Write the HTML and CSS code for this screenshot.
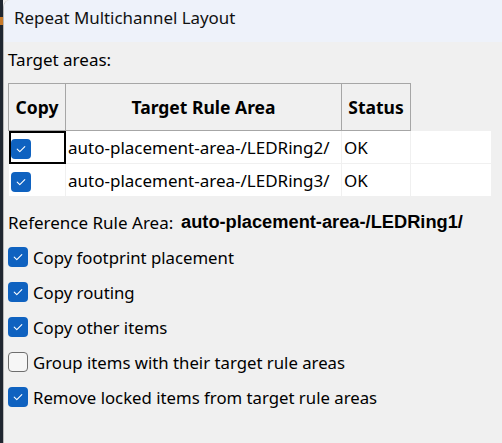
FILE: index.html
```html
<!DOCTYPE html>
<html>
<head>
<meta charset="utf-8">
<link rel="stylesheet" href="styles.css">
</head>
<body>
<div class="desk">
  <div class="strip"><span class="strip-mark"></span></div>
  <div class="window">
    <div class="titlebar">Repeat Multichannel Layout</div>
    <div class="content">
      <div class="section-label">Target areas:</div>
      <div class="grid-wrap">
        <table class="grid">
          <colgroup>
            <col class="w-copy">
            <col class="w-area">
            <col class="w-status">
            <col>
          </colgroup>
          <thead>
            <tr>
              <th>Copy</th>
              <th>Target Rule Area</th>
              <th>Status</th>
              <th class="c-fill"></th>
            </tr>
          </thead>
          <tbody>
            <tr>
              <td class="c-copy focus"><span class="cb on"><svg viewBox="0 0 20 20"><path d="M6.2 10.2 L8.8 12.7 L13.8 7.6"/></svg></span></td>
              <td>auto-placement-area-/LEDRing2/</td>
              <td>OK</td>
              <td></td>
            </tr>
            <tr>
              <td class="c-copy"><span class="cb on"><svg viewBox="0 0 20 20"><path d="M6.2 10.2 L8.8 12.7 L13.8 7.6"/></svg></span></td>
              <td>auto-placement-area-/LEDRing3/</td>
              <td>OK</td>
              <td></td>
            </tr>
          </tbody>
        </table>
      </div>
      <div class="ref-row">
        <span class="ref-label">Reference Rule Area:</span>
        <span class="ref-value">auto-placement-area-/LEDRing1/</span>
      </div>
      <div class="options">
        <label class="opt"><span class="cb on"><svg viewBox="0 0 20 20"><path d="M6.2 10.2 L8.8 12.7 L13.8 7.6"/></svg></span><span>Copy footprint placement</span></label>
        <label class="opt"><span class="cb on"><svg viewBox="0 0 20 20"><path d="M6.2 10.2 L8.8 12.7 L13.8 7.6"/></svg></span><span>Copy routing</span></label>
        <label class="opt"><span class="cb on"><svg viewBox="0 0 20 20"><path d="M6.2 10.2 L8.8 12.7 L13.8 7.6"/></svg></span><span>Copy other items</span></label>
        <label class="opt"><span class="cb off"></span><span>Group items with their target rule areas</span></label>
        <label class="opt"><span class="cb on"><svg viewBox="0 0 20 20"><path d="M6.2 10.2 L8.8 12.7 L13.8 7.6"/></svg></span><span>Remove locked items from target rule areas</span></label>
      </div>
    </div>
  </div>
</div>
</body>
</html>
```
FILE: styles.css
```css
html, body {
  margin: 0;
  padding: 0;
  height: 100%;
  background: #f0f0f0;
  font-family: "Noto Sans", "Open Sans", sans-serif;
  color: #000;
  overflow: hidden;
}
.desk {
  display: flex;
  height: 443px;
}
.strip {
  width: 3px;
  flex: none;
  background: #1f2630;
  padding-top: 17px;
  box-sizing: border-box;
}
.strip-mark {
  display: block;
  width: 3px;
  height: 8px;
  background: #c87a2a;
}
.window {
  flex: 1;
  border-left: 1px solid #b8b8b8;
  border-top-left-radius: 7px;
  background: #f0f0f0;
  display: flex;
  flex-direction: column;
  overflow: hidden;
}
.titlebar {
  height: 42px;
  box-sizing: border-box;
  background: #eef2fa;
  padding: 7px 0 0 10px;
  font-size: 16.9px;
  line-height: 22px;
  color: #111;
}
.content {
  padding: 7px 0 0 4px;
}
.section-label {
  font-size: 17px;
  line-height: 22px;
  height: 22px;
}
.grid-wrap {
  margin-top: 12px;
  margin-right: 10px;
}
.grid {
  border-collapse: collapse;
  table-layout: fixed;
  width: 100%;
  font-size: 17px;
}
.w-copy { width: 57px; }
.w-area { width: 276px; }
.w-status { width: 69px; }
.grid th {
  height: 46px;
  padding: 0;
  background: #f0f0f0;
  border: 1px solid #a6a6a6;
  font-weight: bold;
  font-size: 17.5px;
  text-align: center;
  white-space: nowrap;
  overflow: hidden;
}
.grid th.c-fill {
  border: none;
}
.grid td {
  height: 32px;
  padding: 0 0 0 2px;
  background: #fff;
  border: 1px solid #f0f0f0;
  white-space: nowrap;
  overflow: hidden;
}
.grid td.c-copy { padding-left: 2px; }
.grid td.focus {
  outline: 2px solid #000;
  outline-offset: -2px;
}
.cb {
  display: inline-block;
  width: 20px;
  height: 20px;
  box-sizing: border-box;
  border-radius: 4px;
  vertical-align: middle;
  flex: none;
}
.cb svg {
  display: block;
  width: 20px;
  height: 20px;
}
.cb svg path {
  fill: none;
  stroke: #fff;
  stroke-width: 1.1;
  stroke-linecap: round;
  stroke-linejoin: round;
}
.cb.on { background: #0f62c0; }
.cb.off {
  background: #f6f6f6;
  border: 1px solid #6e6e6e;
}
.ref-row {
  margin-top: 12px;
  display: flex;
  align-items: center;
  height: 26px;
  font-size: 17px;
}
.ref-label { width: 173px; }
.ref-value {
  font-family: "Liberation Sans", Arial, sans-serif;
  font-weight: bold;
  font-size: 18.25px;
}
.options {
  display: flex;
  flex-direction: column;
  gap: 15px;
  margin-top: 12px;
}
.opt {
  display: flex;
  align-items: center;
  gap: 5px;
  height: 20px;
  font-size: 16.75px;
}
```
